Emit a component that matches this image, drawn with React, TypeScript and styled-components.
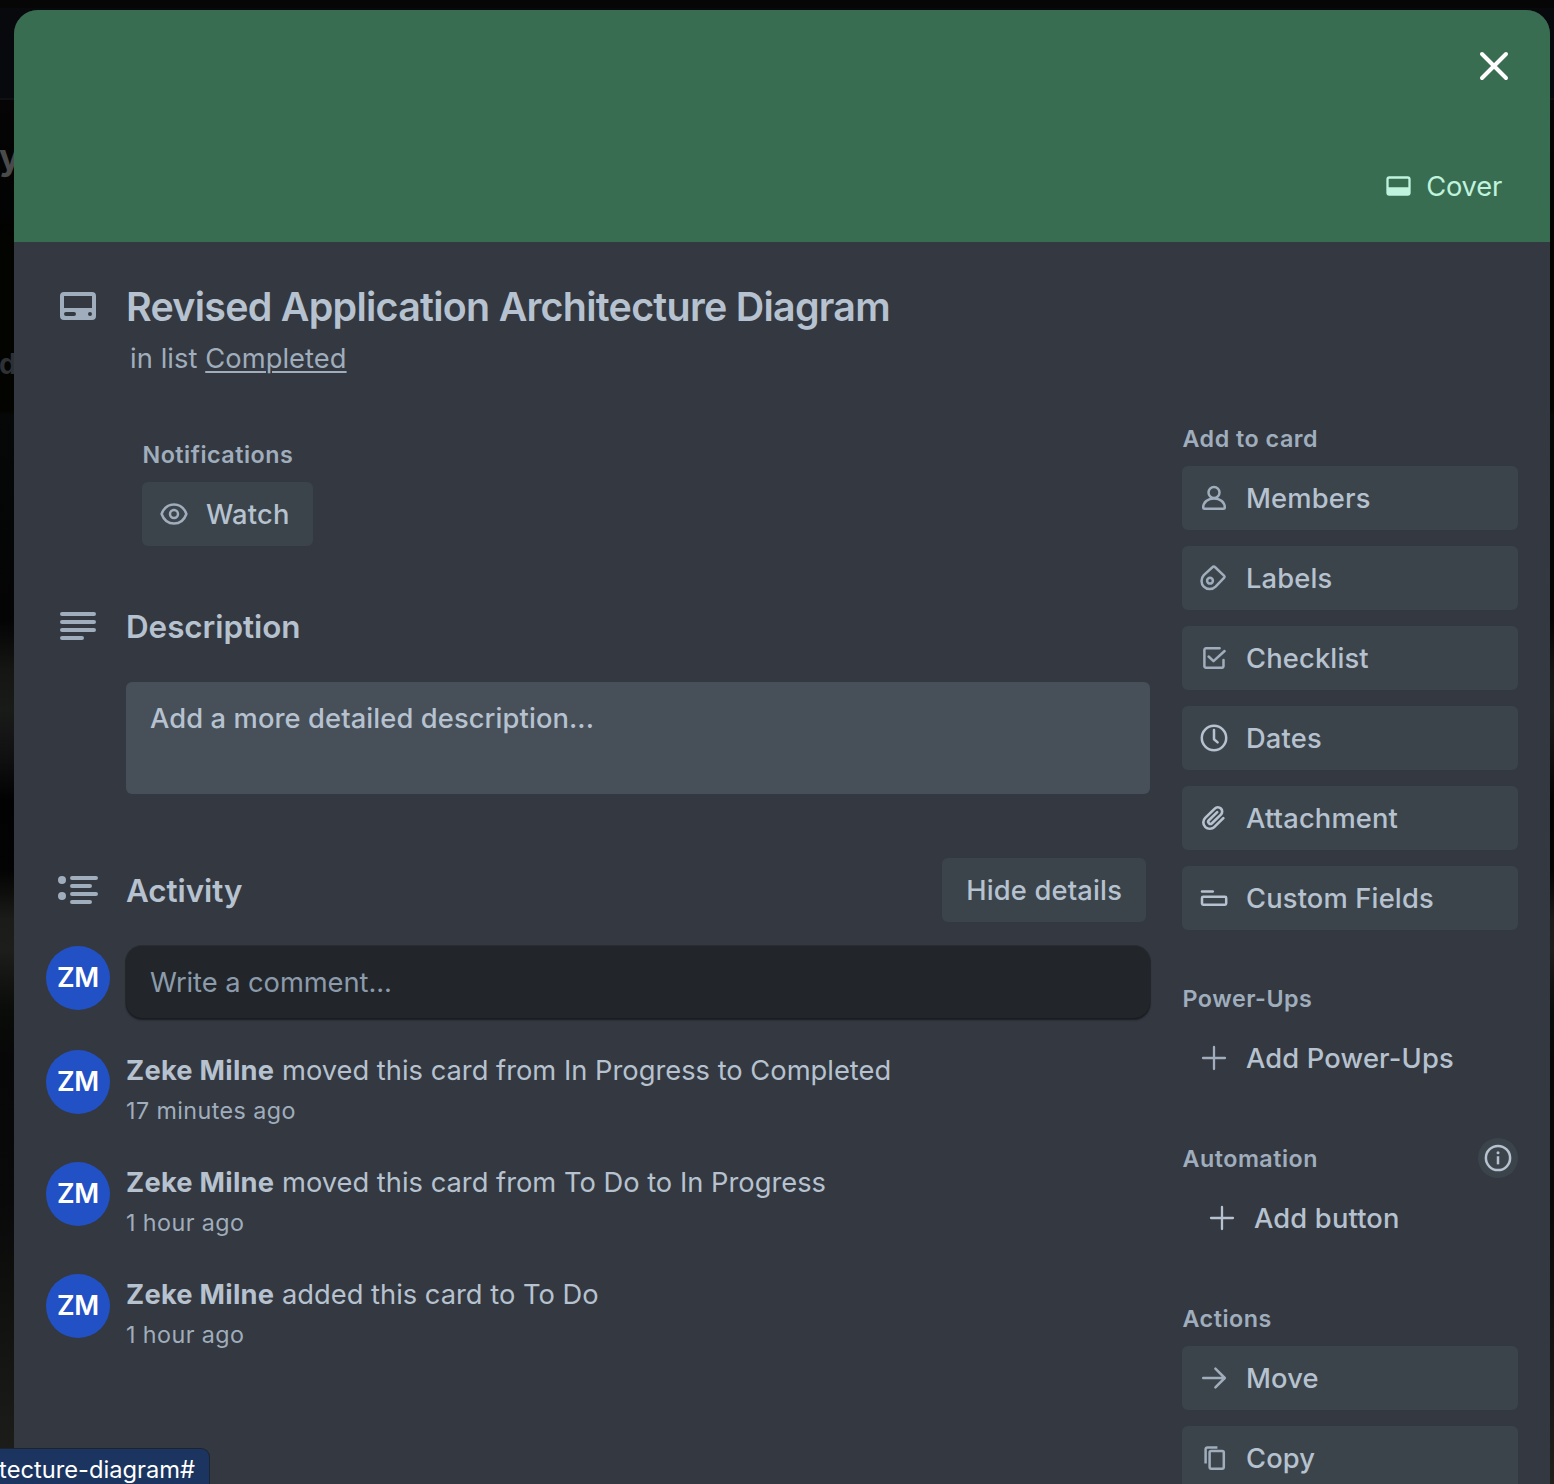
import React from "react";
import styled, { createGlobalStyle } from "styled-components";

const GlobalStyle = createGlobalStyle`
  * { box-sizing: border-box; }
  body { margin: 0; background: #040405; overflow: hidden; }
`;

const color = {
  surface: "#343840",
  button: "#3c444b",
  text: "#b6c2cf",
  subtle: "#9fadbc",
  cover: "#396d52",
  coverText: "#c0f3dd",
  avatar: "#2251c5",
};

const Screen = styled.div`
  position: relative;
  width: 1554px;
  height: 1484px;
  padding: 10px 4px 0 14px;
  overflow: hidden;
  background: linear-gradient(
    #060404 0, #060404 98px, #020303 210px, #030300 240px, #030300 410px,
    #060808 415px, #030403 620px, #151614 670px, #191b19 710px, #0f0f0f 760px,
    #020202 800px, #020302 870px, #1b1b1a 920px, #1d1d1b 950px, #0a0c0a 1010px,
    #060706 1060px, #080908 1200px, #181916 1400px, #1f201c 1484px
  );
  font-family: Inter, "Liberation Sans", sans-serif;
  color: ${color.text};
`;

const BoardTopBar = styled.div`
  position: absolute;
  inset: 0 0 auto 0;
  height: 100px;
  background: #08090c;
  border-top: 8px solid #060606;
  border-bottom: 2px solid #0e1013;
`;

const BoardText = styled.span<{ $top: number; $size: number; $left: number; $color: string }>`
  position: absolute;
  top: ${(p) => p.$top}px;
  left: ${(p) => p.$left}px;
  font-size: ${(p) => p.$size}px;
  line-height: 40px;
  font-weight: 700;
  color: ${(p) => p.$color};
`;

const Modal = styled.main`
  position: relative;
  height: 1474px;
  border-radius: 24px 24px 0 0;
  overflow: hidden;
  background: ${color.surface};
`;

const CoverArea = styled.header`
  height: 232px;
  padding: 32px 32px 24px;
  display: flex;
  flex-direction: column;
  justify-content: space-between;
  align-items: flex-end;
  background: ${color.cover};
`;

const CloseButton = styled.button`
  display: flex;
  width: 48px;
  height: 48px;
  padding: 0;
  border: 0;
  background: none;
  color: #fff;
`;

const CoverButton = styled.button`
  display: flex;
  align-items: center;
  gap: 12px;
  height: 64px;
  padding: 0 16px;
  border: 0;
  background: none;
  color: ${color.coverText};
  font: 400 27.3px/40px Inter, sans-serif;
  letter-spacing: -0.2px;
`;

const ButtonLabel = styled.span`
  padding-top: 2px;
`;

const TitleRow = styled.section`
  display: flex;
  gap: 24px;
  padding: 40px 0 0 40px;
  height: 176px;
`;

const IconSlot = styled.span`
  display: flex;
  flex: none;
  width: 48px;
  height: 48px;
  color: ${color.subtle};
`;

const Title = styled.h1`
  margin: 0;
  font-size: 39.4px;
  line-height: 48px;
  font-weight: 600;
  letter-spacing: -0.73px;
  padding-top: 1px;
`;

const ListLine = styled.p`
  margin: 8px 0 0 4px;
  font-size: 27.3px;
  line-height: 40px;
  letter-spacing: 0.07px;
  color: ${color.subtle};
`;

const ListLink = styled.a`
  text-decoration: underline;
  text-decoration-thickness: 2px;
  text-underline-offset: 3px;
`;

const Columns = styled.div`
  display: flex;
  gap: 32px;
  padding-left: 32px;
`;

const MainColumn = styled.div`
  width: 1104px;
  padding-top: 16px;
`;

const Sidebar = styled.aside`
  width: 336px;
  display: flex;
  flex-direction: column;
  gap: 48px;
`;

const SideSection = styled.section`
  display: flex;
  flex-direction: column;
`;

const SideHead = styled.div`
  display: flex;
  justify-content: space-between;
  align-items: center;
  height: 40px;
  margin-bottom: 8px;
`;

const SmallHeading = styled.h3`
  height: 40px;
  margin: 0;
  padding-left: 0.5px;
  font-size: 23.3px;
  line-height: 42px;
  font-weight: 600;
  letter-spacing: 0.5px;
  color: ${color.subtle};
`;

const ButtonStack = styled.div`
  display: flex;
  flex-direction: column;
  gap: 16px;
`;

const Button = styled.button<{ $ghost?: boolean; $inset?: number }>`
  display: flex;
  align-items: center;
  gap: 16px;
  height: 64px;
  padding: 0 24px 0 ${(p) => 16 + (p.$inset ?? 0)}px;
  border: 0;
  border-radius: 6px;
  background: ${(p) => (p.$ghost ? "none" : color.button)};
  color: ${color.text};
  font: 500 27.3px/40px Inter, sans-serif;
  letter-spacing: 0.17px;
  white-space: nowrap;
`;

const InfoBadge = styled.span`
  display: flex;
  align-items: center;
  justify-content: center;
  width: 40px;
  height: 40px;
  border-radius: 50%;
  background: ${color.button};
`;

const Notifications = styled.section`
  display: flex;
  flex-direction: column;
  align-items: flex-start;
  gap: 8px;
  padding-left: 96px;
`;

const SectionHead = styled.div<{ $top: number }>`
  display: flex;
  align-items: center;
  gap: 24px;
  height: 64px;
  margin-top: ${(p) => p.$top}px;
  padding: 0 4px 0 8px;
`;

const SectionTitle = styled.h2`
  flex: 1;
  margin: 0;
  padding-top: 2px;
  font-size: 31.4px;
  line-height: 40px;
  font-weight: 600;
  letter-spacing: -0.05px;
`;

const DescriptionBox = styled.div`
  height: 112px;
  margin: 24px 0 0 80px;
  padding: 17px 24px;
  border-radius: 6px;
  background: #474f59;
  font-size: 27.3px;
  line-height: 40px;
  font-weight: 500;
  letter-spacing: 0.1px;
`;

const Row = styled.div<{ $height: number }>`
  display: flex;
  gap: 16px;
  height: ${(p) => p.$height}px;
`;

const Avatar = styled.span`
  flex: none;
  width: 64px;
  height: 64px;
  border-radius: 50%;
  background: ${color.avatar};
  color: #fff;
  font-size: 27px;
  line-height: 64px;
  font-weight: 600;
  letter-spacing: -0.3px;
  text-align: center;
`;

const CommentBox = styled.div`
  flex: 1;
  height: 72px;
  padding: 17px 24px;
  border-radius: 16px;
  background: #22262b;
  box-shadow: 0 2px 2px #191c20, 0 0 0 1px #292d32;
  color: #8c9bab;
  font-size: 27.3px;
  line-height: 40px;
  letter-spacing: -0.06px;
`;

const EntryBody = styled.div`
  padding-top: 1px;
`;

const Entry = styled.div`
  font-size: 27.3px;
  line-height: 40px;
  white-space: nowrap;
`;

const Author = styled.b`
  font-weight: 700;
  letter-spacing: 0.25px;
`;

const Time = styled.div`
  font-size: 23.3px;
  line-height: 40px;
  letter-spacing: 0.42px;
  color: ${color.subtle};
`;

const Feed = styled.div`
  padding-top: 24px;
`;

const StatusBubble = styled.div`
  position: absolute;
  left: 0;
  bottom: 0;
  width: 209px;
  height: 35px;
  padding-right: 14px;
  display: flex;
  justify-content: flex-end;
  border-radius: 0 8px 0 0;
  box-shadow: 0 0 0 1px #1d2430;
  background: #1b3460;
  color: #fff;
  font-size: 23.7px;
  line-height: 42px;
  white-space: nowrap;
`;

type IconProps = { size?: number; box?: number; w?: number; children: React.ReactNode; tint?: string };
const Icon = ({ size = 32, box = 32, w = 2.5, children, tint = "currentColor" }: IconProps) => (
  <svg width={size} height={size} viewBox={`0 0 ${box} ${box}`} fill="none" stroke={tint}
    strokeWidth={w} strokeLinecap="round" strokeLinejoin="round">
    {children}
  </svg>
);

const icons = {
  members: (
    <Icon tint={color.subtle} w={2.5}>
      <circle cx="16" cy="10.4" r="5.5" />
      <path d="M5.2 25.6C5.2 20.4 9.8 16.4 16 16.4s10.8 4 10.8 9.2c0 .7-.5 1.2-1.2 1.2H6.4c-.7 0-1.2-.5-1.2-1.2Z" />
    </Icon>
  ),
  labels: (
    <Icon tint={color.subtle}>
      <path d="M14.7 5 5.8 13.2A8.3 8.3 0 0 0 5.8 24.6 8.3 8.3 0 0 0 17.6 24.7L26.2 15.6c.5-.6.5-1.3 0-1.8L16.9 5c-.6-.6-1.6-.6-2.2 0Z" />
      <circle cx="12" cy="18.7" r="2.9" />
    </Icon>
  ),
  checklist: (
    <Icon tint={color.subtle}>
      <path d="M21.6 6.3H8A1.6 1.6 0 0 0 6.4 8v16A1.6 1.6 0 0 0 8 25.7h16a1.6 1.6 0 0 0 1.5-1.7v-6" />
      <path d="m10.6 14.5 4.9 4.7L26.6 9" />
    </Icon>
  ),
  dates: (
    <Icon>
      <circle cx="16" cy="16" r="12.2" />
      <path d="M16 8v9.2l3.6 3.2" />
    </Icon>
  ),
  attachment: (
    <Icon box={24}>
      <path stroke="none" fill="currentColor" d="M11.643 17.965c-1.53 1.495-4.016 1.496-5.542.004a3.773 3.773 0 0 1 .002-5.412l7.147-6.985a2.316 2.316 0 0 1 3.233-.003c.893.873.895 2.282.004 3.153l-6.703 6.55a.653.653 0 0 1-.914-.008.62.62 0 0 1 0-.902l6.229-6.087a.941.941 0 0 0 0-1.353.995.995 0 0 0-1.384 0l-6.23 6.087a2.502 2.502 0 0 0 0 3.607 2.643 2.643 0 0 0 3.683.009l6.703-6.55a4.074 4.074 0 0 0-.003-5.859 4.306 4.306 0 0 0-6.002.003l-7.148 6.985a5.655 5.655 0 0 0-.001 8.118c2.29 2.24 6.015 2.239 8.31-.005l6.686-6.533a.941.941 0 0 0 0-1.353.995.995 0 0 0-1.384 0l-6.686 6.534z" />
    </Icon>
  ),
  fields: (
    <Icon>
      <path d="M4 9.4h10.8" />
      <rect x="4" y="14.7" width="24.2" height="8" rx="1.2" />
    </Icon>
  ),
  plus: (
    <Icon w={2.3} tint={color.subtle}>
      <path d="M16 5v22M5 16h22" />
    </Icon>
  ),
  plusBright: (
    <Icon w={2.3}>
      <path d="M16 5v22M5 16h22" />
    </Icon>
  ),
  move: (
    <Icon tint={color.subtle}>
      <path d="M5.2 16h21.5M17.4 6.6l9.4 9.4-9.4 9.4" />
    </Icon>
  ),
  copy: (
    <Icon tint={color.subtle}>
      <rect x="11.6" y="8.9" width="14.2" height="17.8" rx="1.6" />
      <path d="M19.4 5.4H9.4a1.8 1.8 0 0 0-1.8 1.8v14.4" strokeLinecap="butt" />
    </Icon>
  ),
  watch: (
    <Icon tint={color.subtle}>
      <path d="M3.6 16C5.8 10 10.6 6.4 16 6.4S26.2 10 28.4 16C26.2 22 21.4 25.6 16 25.6S5.8 22 3.6 16Z" />
      <circle cx="16" cy="16" r="4" />
    </Icon>
  ),
  info: (
    <Icon>
      <circle cx="16" cy="16" r="12.1" />
      <path d="M16 15.5v5.6" strokeLinecap="square" />
      <circle cx="16" cy="10.8" r="1.5" fill="currentColor" stroke="none" />
    </Icon>
  ),
  cover: (
    <Icon w={2.3}>
      <rect x="5.5" y="7.5" width="22" height="17" rx="1.8" />
      <path d="M5.5 17.2h22v6a1.5 1.5 0 0 1-1.5 1.5H7a1.5 1.5 0 0 1-1.5-1.5Z" fill="currentColor" stroke="none" />
    </Icon>
  ),
  close: (
    <Icon size={48} box={48} w={4}>
      <path d="M12 12l24 24M36 12 12 36" />
    </Icon>
  ),
  card: (
    <Icon size={48} box={24}>
      <path stroke="none" fill="currentColor" fillRule="evenodd" d="M5 5h14a2 2 0 0 1 2 2v10a2 2 0 0 1-2 2H5a2 2 0 0 1-2-2V7a2 2 0 0 1 2-2Zm0 2v6h14V7Zm1 8a1 1 0 0 0 0 2h4a1 1 0 0 0 0-2Zm12 0a1 1 0 0 0 0 2 1 1 0 0 0 0-2Z" />
    </Icon>
  ),
  lines: (
    <Icon size={48} box={24} w={2}>
      <path d="M4 6h16M4 10h16M4 14h16M4 18h10" />
    </Icon>
  ),
  activity: (
    <Icon size={48} box={24} w={2}>
      <path d="M9 6h12M9 10h9M9 14h12M9 18h9" />
      <g fill="currentColor" stroke="none">
        <circle cx="4" cy="7" r="2" />
        <circle cx="4" cy="15" r="2" />
      </g>
    </Icon>
  ),
};

const addItems: [keyof typeof icons, string][] = [
  ["members", "Members"],
  ["labels", "Labels"],
  ["checklist", "Checklist"],
  ["dates", "Dates"],
  ["attachment", "Attachment"],
  ["fields", "Custom Fields"],
];

const actionItems: [keyof typeof icons, string][] = [
  ["move", "Move"],
  ["copy", "Copy"],
];

const entries = [
  { text: "moved this card from In Progress to Completed", time: "17 minutes ago" },
  { text: "moved this card from To Do to In Progress", time: "1 hour ago" },
  { text: "added this card to To Do", time: "1 hour ago" },
];

export default function App() {
  return (
    <Screen>
      <GlobalStyle />
      <BoardTopBar />
      <BoardText $top={137} $left={-1} $size={36} $color="#4a4a4a">y</BoardText>
      <BoardText $top={344} $left={-1} $size={28} $color="#2d3034">d</BoardText>
      <Modal>
        <CoverArea>
          <CloseButton aria-label="Close">{icons.close}</CloseButton>
          <CoverButton>
            {icons.cover}
            <ButtonLabel>Cover</ButtonLabel>
          </CoverButton>
        </CoverArea>
        <TitleRow>
          <IconSlot>{icons.card}</IconSlot>
          <div>
            <Title>Revised Application Architecture Diagram</Title>
            <ListLine>
              in list <ListLink>Completed</ListLink>
            </ListLine>
          </div>
        </TitleRow>
        <Columns>
          <MainColumn>
            <Notifications>
              <SmallHeading>Notifications</SmallHeading>
              <Button>{icons.watch}<ButtonLabel>Watch</ButtonLabel></Button>
            </Notifications>
            <SectionHead $top={48}>
              <IconSlot>{icons.lines}</IconSlot>
              <SectionTitle>Description</SectionTitle>
            </SectionHead>
            <DescriptionBox>Add a more detailed description...</DescriptionBox>
            <SectionHead $top={64}>
              <IconSlot>{icons.activity}</IconSlot>
              <SectionTitle>Activity</SectionTitle>
              <Button $inset={8}><ButtonLabel>Hide details</ButtonLabel></Button>
            </SectionHead>
            <Feed>
              <Row $height={104}>
                <Avatar>ZM</Avatar>
                <CommentBox>Write a comment...</CommentBox>
              </Row>
              {entries.map((e) => (
                <Row key={e.text} $height={112}>
                  <Avatar>ZM</Avatar>
                  <EntryBody>
                    <Entry>
                      <Author>Zeke Milne</Author> {e.text}
                    </Entry>
                    <Time>{e.time}</Time>
                  </EntryBody>
                </Row>
              ))}
            </Feed>
          </MainColumn>
          <Sidebar>
            <SideSection>
              <SideHead><SmallHeading>Add to card</SmallHeading></SideHead>
              <ButtonStack>
                {addItems.map(([icon, label]) => (
                  <Button key={label}>{icons[icon]}<ButtonLabel>{label}</ButtonLabel></Button>
                ))}
              </ButtonStack>
            </SideSection>
            <SideSection>
              <SideHead><SmallHeading>Power-Ups</SmallHeading></SideHead>
              <Button $ghost>{icons.plus}<ButtonLabel>Add Power-Ups</ButtonLabel></Button>
            </SideSection>
            <SideSection>
              <SideHead>
                <SmallHeading>Automation</SmallHeading>
                <InfoBadge>{icons.info}</InfoBadge>
              </SideHead>
              <Button $ghost $inset={8}>{icons.plusBright}<ButtonLabel>Add button</ButtonLabel></Button>
            </SideSection>
            <SideSection>
              <SideHead><SmallHeading>Actions</SmallHeading></SideHead>
              <ButtonStack>
                {actionItems.map(([icon, label]) => (
                  <Button key={label}>{icons[icon]}<ButtonLabel>{label}</ButtonLabel></Button>
                ))}
              </ButtonStack>
            </SideSection>
          </Sidebar>
        </Columns>
      </Modal>
      <StatusBubble>tecture-diagram#</StatusBubble>
    </Screen>
  );
}
